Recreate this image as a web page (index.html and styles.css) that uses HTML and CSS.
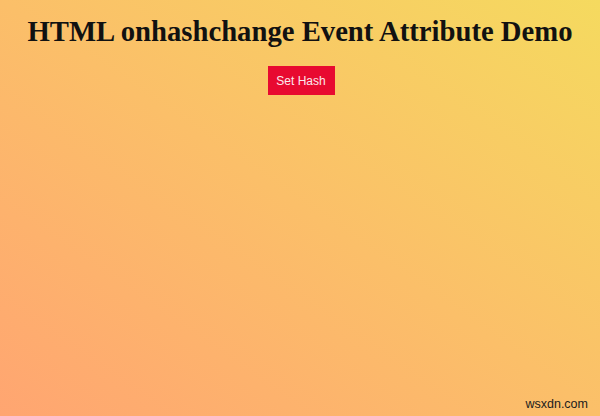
FILE: index.html
```html
<!DOCTYPE html>
<html>
<head>
<meta charset="utf-8">
<link rel="stylesheet" href="styles.css">
</head>
<body>
<main class="page">
  <h1 class="title">HTML onhashchange Event Attribute Demo</h1>
  <button class="btn">Set Hash</button>
  <div class="watermark">wsxdn.com</div>
</main>
</body>
</html>
```
FILE: styles.css
```css
html, body {
  margin: 0;
  padding: 0;
  width: 600px;
  height: 416px;
  overflow: hidden;
}
.page {
  position: relative;
  width: 600px;
  height: 416px;
  background: linear-gradient(to top right, #ffa571 0%, #fbbf69 50%, #f5da5f 100%);
  display: flex;
  flex-direction: column;
  align-items: center;
  font-family: "Liberation Serif", serif;
}
.title {
  margin: 12px 0 0 0;
  font-size: 28.7px;
  font-weight: bold;
  color: #111;
  line-height: 38px;
}
.btn {
  margin-top: 16px;
  margin-left: 2px;
  width: 67px;
  height: 29px;
  background: #e80a30;
  color: #fbe9ec;
  border: none;
  font-family: "Liberation Sans", Arial, sans-serif;
  font-size: 12px;
  padding: 0;
}
.watermark {
  position: absolute;
  right: 12px;
  bottom: 5px;
  font-family: "Liberation Sans", Arial, sans-serif;
  font-size: 12.5px;
  color: #1c1c1c;
}
```
